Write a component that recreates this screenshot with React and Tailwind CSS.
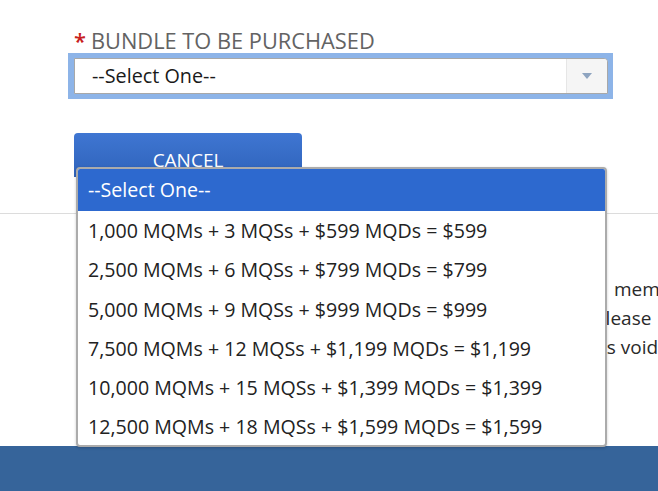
import React from "react";

const options = [
  "--Select One--",
  "1,000 MQMs + 3 MQSs + $599 MQDs = $599",
  "2,500 MQMs + 6 MQSs + $799 MQDs = $799",
  "5,000 MQMs + 9 MQSs + $999 MQDs = $999",
  "7,500 MQMs + 12 MQSs + $1,199 MQDs = $1,199",
  "10,000 MQMs + 15 MQSs + $1,399 MQDs = $1,399",
  "12,500 MQMs + 18 MQSs + $1,599 MQDs = $1,599",
];

export default function App() {
  return (
    <div
      className="relative w-[658px] h-[491px] overflow-hidden bg-white flex flex-col"
      style={{ fontFamily: '"Open Sans", "Liberation Sans", sans-serif' }}
    >
      <div className="px-[68px] pt-[28px]">
        <div className="ml-[6px] flex items-center gap-[5px] text-[21.8px] leading-[25px] text-[#636363] uppercase">
          <span className="text-[#c8201d] font-semibold">*</span>
          <span>Bundle to be purchased</span>
        </div>
        <div className="w-[545px] h-[46px] bg-[#8db4e8] p-[5px] pl-[6px]">
          <div className="h-full flex items-stretch bg-white border border-[#a8a8a8] rounded-tr-[4px] overflow-hidden">
            <div className="flex-1 flex items-center pl-[17px] text-[19.8px] text-[#1a1a1a]">
              --Select One--
            </div>
            <div className="w-[41px] flex items-center justify-center bg-[#f5f5f5] border-l border-[#e6e6e6]">
              <svg width="10" height="6" viewBox="0 0 10 6">
                <path d="M0 0 L10 0 L5 6 Z" fill="#8ea4c0" />
              </svg>
            </div>
          </div>
        </div>
        <div className="mt-[34px] ml-[6px] w-[228px] h-[44px] rounded-t-[4px] bg-gradient-to-b from-[#3f76d2] to-[#2f63bb] flex justify-center pt-[16px] text-[19px] leading-[22px] text-white uppercase">
          Cancel
        </div>
      </div>
      <div className="mt-[36px] border-b border-[#dcdcdc]" />
      <div className="mt-[61px] text-[19px] leading-[29px] text-[#2a2a2a] whitespace-nowrap">
        <div className="pl-[614px]">membership</div>
        <div className="pl-[594px]">please</div>
        <div className="pl-[602px]">is void</div>
      </div>
      <div className="mt-auto h-[45px] bg-[#36649a]" />

      <div className="absolute left-[76px] top-[167px] w-[531px] h-[280px] bg-white border-2 border-[#ababab] rounded-[4px] shadow-[0_1px_3px_rgba(0,0,0,0.2)] overflow-hidden">
        {options.map((o, i) => (
          <div
            key={i}
            className={
              i === 0
                ? "h-[42px] flex items-center pl-[10px] text-[19.6px] bg-[#2d69cf] text-white"
                : "h-[39.3px] flex items-center pl-[10px] text-[19.6px] text-[#222]"
            }
          >
            {o}
          </div>
        ))}
      </div>
    </div>
  );
}
